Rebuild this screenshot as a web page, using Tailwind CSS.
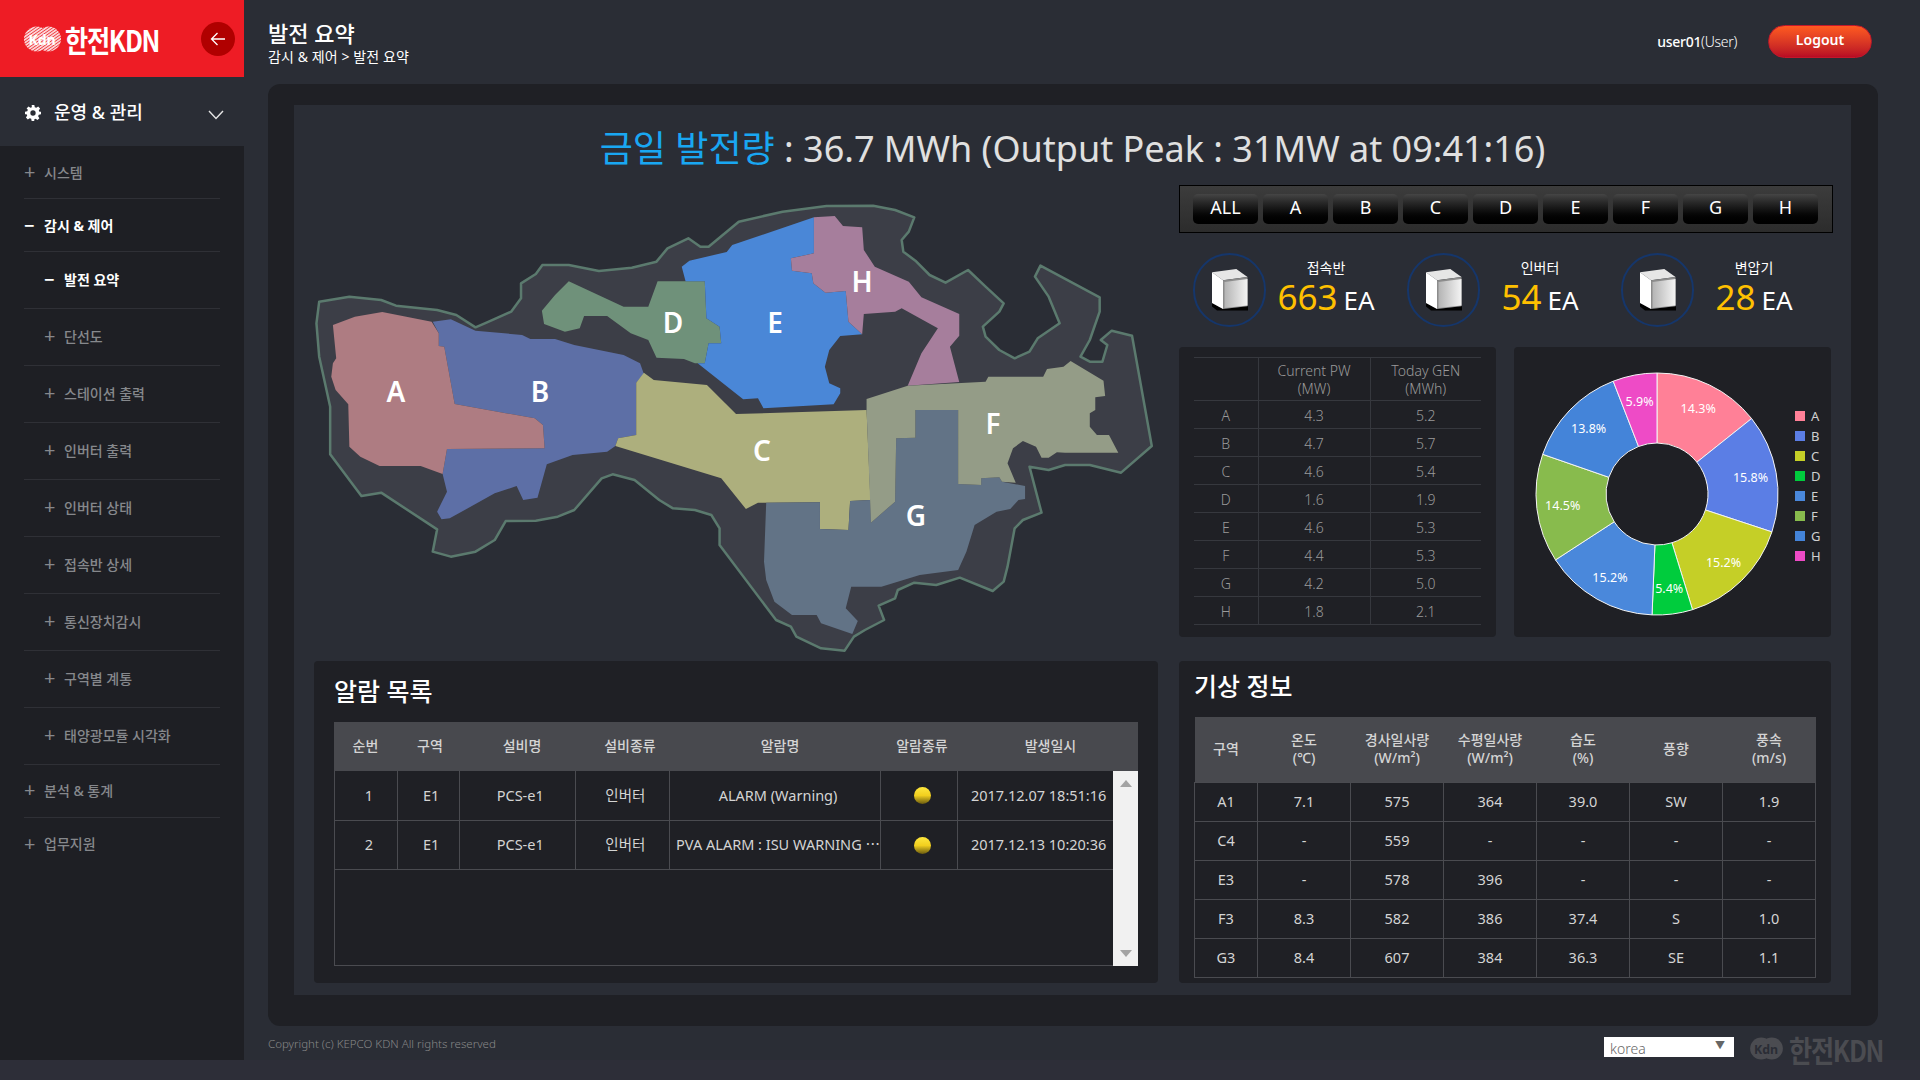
<!DOCTYPE html>
<html lang="ko">
<head>
<meta charset="UTF-8">
<title>발전 요약</title>
<script src="https://cdn.jsdelivr.net/npm/@tailwindcss/browser@4"></script>
</head>
<body class="w-[1920px] h-[1080px] overflow-hidden bg-[#2d2e38] font-['Noto_Sans','Noto_Sans_CJK_KR',sans-serif] text-white">
<div class="flex h-[1060px]">

  <!-- sidebar -->
  <aside class="w-[244px] shrink-0 bg-[#1e1f24] flex flex-col">
    <div class="h-[77px] bg-[#ee1c25] flex items-center justify-between pl-[24px] pr-[9px]">
      <div class="flex items-center gap-[4px]">
        <svg width="37" height="26" viewBox="0 0 37 26">
          <defs><pattern id="hatch" width="2.500" height="2.500" patternUnits="userSpaceOnUse" patternTransform="rotate(-35)"><rect width="2.500" height="2.500" fill="#fbd6d6"/><rect width="2.500" height="0.700" fill="#ee1c25"/></pattern></defs>
          <circle cx="12.500" cy="13" r="12.500" fill="url(#hatch)"/>
          <circle cx="24.500" cy="13" r="12.500" fill="url(#hatch)"/>
          <text x="18" y="19" text-anchor="middle" font-size="14" font-weight="700" fill="#fff">Kdn</text>
        </svg>
        <span class="w-[93px] block origin-left scale-x-[0.84] whitespace-nowrap text-[30px] leading-none font-bold tracking-[-1.5px] font-['Noto_Sans_CJK_KR',sans-serif]">한전KDN</span>
      </div>
      <button class="w-[34px] h-[34px] rounded-full bg-[#b00000] flex items-center justify-center">
        <svg width="16" height="14" viewBox="0 0 16 14" fill="none" stroke="#fff" stroke-width="1.3"><path d="M15 7H1.5M7.5 1 1.5 7l6 6"/></svg>
      </button>
    </div>
    <div class="h-[69px] bg-[#2a2d35] flex items-center pl-[25px] pr-[20px]">
      <svg class="mt-[2px]" width="16" height="16" viewBox="0 0 24 24" fill="#fff"><path fill-rule="evenodd" d="M10 0h4l.7 3.4 2.2.9L19.800 2.400 22.600 5.200 20.700 8.100l.9 2.200L24 10v4l-3.400.7-.9 2.200 1.900 2.900-2.800 2.800-2.900-1.900-2.200.9L14 24h-4l-.7-3.400-2.200-.9-2.900 1.900-2.800-2.800 1.900-2.900-.9-2.200L0 14v-4l3.400-.7.900-2.200L2.400 5.200 5.200 2.400l2.900 1.900 2.200-.9zM12 8a4 4 0 1 0 0 8 4 4 0 0 0 0-8z"/></svg>
      <span class="ml-[13px] text-[18px] font-medium leading-none">운영 &amp; 관리</span>
      <svg class="ml-auto mt-[7px]" width="16" height="10" viewBox="0 0 16 10" fill="none" stroke="#e5e5e5" stroke-width="1.4"><path d="m1 1 7 7.500L15 1"/></svg>
    </div>
    <nav class="px-[24px] text-[14px] font-medium text-[#86888c]">
      <div class="h-[53px] flex items-center border-b border-[#2f3036]"><span class="w-[20px] text-[20px] font-normal leading-none">+</span>시스템</div>
      <div class="h-[53px] flex items-center border-b border-[#2f3036] text-white font-bold"><span class="w-[20px] text-[18px] leading-none">−</span>감시 &amp; 제어</div>
      <div class="h-[57px] pb-[2px] flex items-center border-b border-[#2f3036] pl-[20px] text-white font-bold"><span class="w-[20px] text-[18px] leading-none">−</span>발전 요약</div>
      <div class="h-[57px] pb-[2px] flex items-center border-b border-[#2f3036] pl-[20px]"><span class="w-[20px] text-[20px] font-normal leading-none">+</span>단선도</div>
      <div class="h-[57px] pb-[2px] flex items-center border-b border-[#2f3036] pl-[20px]"><span class="w-[20px] text-[20px] font-normal leading-none">+</span>스테이션 출력</div>
      <div class="h-[57px] pb-[2px] flex items-center border-b border-[#2f3036] pl-[20px]"><span class="w-[20px] text-[20px] font-normal leading-none">+</span>인버터 출력</div>
      <div class="h-[57px] pb-[2px] flex items-center border-b border-[#2f3036] pl-[20px]"><span class="w-[20px] text-[20px] font-normal leading-none">+</span>인버터 상태</div>
      <div class="h-[57px] pb-[2px] flex items-center border-b border-[#2f3036] pl-[20px]"><span class="w-[20px] text-[20px] font-normal leading-none">+</span>접속반 상세</div>
      <div class="h-[57px] pb-[2px] flex items-center border-b border-[#2f3036] pl-[20px]"><span class="w-[20px] text-[20px] font-normal leading-none">+</span>통신장치감시</div>
      <div class="h-[57px] pb-[2px] flex items-center border-b border-[#2f3036] pl-[20px]"><span class="w-[20px] text-[20px] font-normal leading-none">+</span>구역별 계통</div>
      <div class="h-[57px] pb-[2px] flex items-center border-b border-[#2f3036] pl-[20px]"><span class="w-[20px] text-[20px] font-normal leading-none">+</span>태양광모듈 시각화</div>
      <div class="h-[53px] pb-[2px] flex items-center border-b border-[#2f3036]"><span class="w-[20px] text-[20px] font-normal leading-none">+</span>분석 &amp; 통계</div>
      <div class="h-[53px] pb-[2px] flex items-center"><span class="w-[20px] text-[20px] font-normal leading-none">+</span>업무지원</div>
    </nav>
  </aside>

  <!-- main -->
  <main class="flex-1 bg-[#2a2d35] pl-[24px] flex flex-col">
    <header class="h-[84px] flex items-start justify-between pr-[48px]">
      <div class="pt-[19px]">
        <h1 class="text-[22px] leading-[28px] font-medium">발전 요약</h1>
        <p class="text-[14px] leading-[20px] tracking-[0.1px]">감시 &amp; 제어 &gt; 발전 요약</p>
      </div>
      <div class="flex items-center gap-[31px] pt-[25px]">
        <span class="text-[14px] tracking-[-0.3px]"><span class="font-medium">user01</span><span class="font-light">(User)</span></span>
        <button class="w-[104px] h-[33px] rounded-full border border-[#c2182b] bg-gradient-to-b from-[#ff5a20] to-[#b80a24] text-[14px] font-semibold pb-[4px]">Logout</button>
      </div>
    </header>

    <div class="w-[1610px] h-[942px] rounded-[12px] bg-[#1f2025] pl-[26px] pt-[21px]">
      <div class="w-[1557px] h-[890px] bg-[#2a2d35]">
        <div class="h-[80px] flex items-center justify-center pt-[8px] text-[36px] leading-none text-[#e0e0e0]">
          <p><span class="text-[#19a7f2]">금일 발전량</span> : 36.7 MWh (Output Peak : 31MW at 09:41:16)</p>
        </div>

        <div class="h-[476px] flex">
          <!-- map -->
          <div class="relative ml-[6px] mt-[5px] w-[860px] h-[470px] shrink-0 text-[28px] font-semibold leading-none">
            <svg class="w-[860px] h-[470px]" viewBox="0 0 1568 1410" preserveAspectRatio="none">
              <path vector-effect="non-scaling-stroke" fill="#3c3e47" stroke="#5b7a6e" stroke-width="2.500" stroke-linejoin="round" d="M35 335 L90 320 L148 330 L175 347 L250 360 L285 375 L320 412 L340 398 L385 365 L403 325 L403 280 L430 252 L442 225 L490 225 L545 243 L605 233 L650 215 L670 175 L708 145 L730 170 L745 170 L800 95 L880 65 L960 48 L1045 47 L1085 60 L1120 82 L1110 125 L1097 150 L1100 185 L1122 212 L1148 255 L1177 278 L1218 240 L1250 290 L1283 340 L1275 365 L1245 410 L1250 440 L1275 480 L1303 505 L1330 485 L1345 445 L1385 400 L1365 320 L1340 260 L1350 227 L1458 322 L1458 365 L1440 450 L1423 500 L1440 515 L1463 515 L1472 465 L1460 450 L1480 422 L1517 437 L1553 768 L1497 848 L1440 825 L1395 825 L1365 840 L1330 830 L1352 968 L1318 990 L1303 1015 L1290 1130 L1283 1175 L1263 1203 L1203 1163 L1160 1185 L1120 1178 L1090 1200 L1085 1225 L1055 1247 L1065 1290 L1030 1320 L1010 1340 L993 1382 L950 1375 L905 1340 L895 1310 L868 1290 L765 1065 L765 1015 L750 975 L720 960 L680 955 L655 930 L610 870 L570 853 L550 865 L500 960 L470 980 L430 992 L375 993 L355 1050 L320 1085 L275 1100 L242 1085 L250 1018 L148 908 L112 918 L55 793 L55 650 L35 500 L30 400 Z"/>
              <path fill="#5d6fa6" d="M242 395 L275 388 L320 422 L405 435 L420 447 L465 447 L500 465 L590 495 L620 520 L627 552 L613 578 L613 735 L580 745 L575 768 L560 785 L497 795 L450 823 L433 923 L407 930 L395 888 L355 910 L273 985 L258 988 L250 965 L268 905 L260 852 L268 777 L446 775 L443 705 L428 685 L282 642 L263 470 L253 468 L253 430 Z"/>
              <path fill="#ae7c82" d="M60 405 L100 380 L150 366 L240 395 L253 430 L253 468 L263 470 L282 642 L428 685 L443 705 L446 775 L268 777 L260 852 L220 828 L145 828 L110 800 L90 770 L88 643 L65 600 L57 560 L60 520 L66 505 Z"/>
              <path fill="#adaf7d" d="M627 548 L645 570 L742 585 L795 672 L1033 660 L1040 930 L1003 933 L1000 1020 L948 1017 L948 937 L835 938 L813 957 L768 865 L575 768 L580 745 L613 735 L613 578 Z"/>
              <path fill="#6f917a" d="M490 274 L590 350 L635 350 L652 274 L738 274 L741 385 L765 410 L768 460 L745 460 L738 520 L720 520 L700 507 L650 503 L635 450 L603 430 L560 378 L518 378 L510 415 L483 425 L445 402 L441 362 L465 315 Z"/>
              <path fill="#4a87d7" d="M937 82 L937 190 L895 205 L897 242 L933 250 L936 280 L958 308 L995 303 L1000 395 L1025 433 L985 438 L965 480 L957 530 L965 580 L985 595 L985 610 L973 643 L845 655 L835 625 L808 628 L725 520 L738 520 L745 460 L768 460 L765 410 L741 385 L738 274 L703 274 L696 230 L710 212 L778 186 L788 165 Z"/>
              <path fill="#a67e9c" d="M937 82 L975 78 L990 108 L1025 112 L1028 180 L1048 230 L1110 275 L1133 322 L1202 372 L1202 437 L1185 470 L1202 576 L1108 587 L1133 490 L1163 415 L1097 355 L1085 365 L1028 372 L1025 433 L1000 395 L995 303 L958 308 L936 280 L933 250 L897 242 L895 205 L937 190 Z"/>
              <path fill="#627386" d="M1122 660 L1200 660 L1200 882 L1242 885 L1242 865 L1275 862 L1280 875 L1322 888 L1322 927 L1310 930 L1295 957 L1270 965 L1230 1005 L1215 1085 L1200 1140 L1130 1155 L1060 1190 L1005 1190 L995 1255 L1017 1293 L1007 1332 L950 1300 L942 1275 L897 1275 L865 1235 L850 1170 L846 1115 L850 938 L948 937 L948 1017 L1000 1020 L1003 933 L1040 930 L1041 998 L1085 935 L1087 745 L1122 743 Z"/>
              <path fill="#949c87" d="M1033 627 L1108 587 L1250 575 L1255 560 L1355 560 L1362 537 L1392 530 L1405 513 L1465 572 L1468 618 L1450 622 L1450 660 L1440 670 L1440 710 L1453 735 L1475 735 L1492 788 L1395 788 L1380 787 L1365 803 L1352 803 L1342 770 L1318 753 L1300 775 L1290 820 L1305 878 L1280 875 L1275 862 L1242 865 L1242 885 L1200 882 L1200 660 L1122 660 L1122 743 L1087 745 L1085 935 L1041 998 L1033 660 Z"/>
            </svg>
            <span class="absolute left-[96px] top-[201px] -translate-x-1/2 -translate-y-1/2">A</span>
            <span class="absolute left-[240px] top-[201px] -translate-x-1/2 -translate-y-1/2">B</span>
            <span class="absolute left-[462px] top-[260px] -translate-x-1/2 -translate-y-1/2">C</span>
            <span class="absolute left-[373px] top-[132px] -translate-x-1/2 -translate-y-1/2">D</span>
            <span class="absolute left-[475px] top-[132px] -translate-x-1/2 -translate-y-1/2">E</span>
            <span class="absolute left-[693px] top-[233px] -translate-x-1/2 -translate-y-1/2">F</span>
            <span class="absolute left-[616px] top-[325px] -translate-x-1/2 -translate-y-1/2">G</span>
            <span class="absolute left-[562px] top-[91px] -translate-x-1/2 -translate-y-1/2">H</span>
          </div>

          <div class="ml-[19px] w-[654px]">
            <!-- zone filter -->
            <div class="h-[48px] border border-black bg-gradient-to-b from-[#3c3c3c] to-[#2c2c2c] flex items-center gap-[5px] pl-[13px] text-[18px]">
              <button class="w-[65px] h-[30px] rounded-[5px] bg-gradient-to-b from-[#454545] to-black leading-none pb-[4px]">ALL</button>
              <button class="w-[65px] h-[30px] rounded-[5px] bg-gradient-to-b from-[#454545] to-black leading-none pb-[4px]">A</button>
              <button class="w-[65px] h-[30px] rounded-[5px] bg-gradient-to-b from-[#454545] to-black leading-none pb-[4px]">B</button>
              <button class="w-[65px] h-[30px] rounded-[5px] bg-gradient-to-b from-[#454545] to-black leading-none pb-[4px]">C</button>
              <button class="w-[65px] h-[30px] rounded-[5px] bg-gradient-to-b from-[#454545] to-black leading-none pb-[4px]">D</button>
              <button class="w-[65px] h-[30px] rounded-[5px] bg-gradient-to-b from-[#454545] to-black leading-none pb-[4px]">E</button>
              <button class="w-[65px] h-[30px] rounded-[5px] bg-gradient-to-b from-[#454545] to-black leading-none pb-[4px]">F</button>
              <button class="w-[65px] h-[30px] rounded-[5px] bg-gradient-to-b from-[#454545] to-black leading-none pb-[4px]">G</button>
              <button class="w-[65px] h-[30px] rounded-[5px] bg-gradient-to-b from-[#454545] to-black leading-none pb-[4px]">H</button>
            </div>

            <!-- equipment counts -->
            <div class="mt-[20px] h-[74px] flex gap-[21px] pl-[14px]">
              <div class="w-[193px] flex">
                <div class="w-[73px] h-[74px] shrink-0 rounded-full border-2 border-[#15366b] flex items-center justify-center">
                  <svg width="36" height="42" viewBox="0 0 36 42"><defs><linearGradient id="cubeFace"><stop offset="0" stop-color="#b4b4b4"/><stop offset="1" stop-color="#f4f4f4"/></linearGradient></defs><path fill="#000" d="M0 34 11 40 36 37 36 41.500 5 41.500 0 37.500Z"/><path fill="#e6e6e6" d="M0 3.300 24.300 0 35.500 8 11 11.300Z"/><path fill="#fff" d="M0 3.300 11 11.300 11 40 0 34Z"/><path fill="#8c8c8c" d="M11 11.300 35.500 8 35.500 37.300 11 40Z"/><path fill="url(#cubeFace)" d="M12.500 13 35.500 10 35.500 36.500 12.500 39Z"/></svg>
                </div>
                <div class="w-[120px] text-center">
                  <p class="text-[14px] leading-[20px] pt-[5px]">접속반</p>
                  <p class="h-[36px] mt-[1px] flex items-baseline justify-center gap-[6px] whitespace-nowrap"><span class="block text-[35px] leading-[36px] text-[#ffc000]">663</span><span class="block text-[26px] leading-[36px]">EA</span></p>
                </div>
              </div>
              <div class="w-[193px] flex">
                <div class="w-[73px] h-[74px] shrink-0 rounded-full border-2 border-[#15366b] flex items-center justify-center">
                  <svg width="36" height="42" viewBox="0 0 36 42"><path fill="#000" d="M0 34 11 40 36 37 36 41.500 5 41.500 0 37.500Z"/><path fill="#e6e6e6" d="M0 3.300 24.300 0 35.500 8 11 11.300Z"/><path fill="#fff" d="M0 3.300 11 11.300 11 40 0 34Z"/><path fill="#8c8c8c" d="M11 11.300 35.500 8 35.500 37.300 11 40Z"/><path fill="url(#cubeFace)" d="M12.500 13 35.500 10 35.500 36.500 12.500 39Z"/></svg>
                </div>
                <div class="w-[120px] text-center">
                  <p class="text-[14px] leading-[20px] pt-[5px]">인버터</p>
                  <p class="h-[36px] mt-[1px] flex items-baseline justify-center gap-[6px] whitespace-nowrap"><span class="block text-[35px] leading-[36px] text-[#ffc000]">54</span><span class="block text-[26px] leading-[36px]">EA</span></p>
                </div>
              </div>
              <div class="w-[193px] flex">
                <div class="w-[73px] h-[74px] shrink-0 rounded-full border-2 border-[#15366b] flex items-center justify-center">
                  <svg width="36" height="42" viewBox="0 0 36 42"><path fill="#000" d="M0 34 11 40 36 37 36 41.500 5 41.500 0 37.500Z"/><path fill="#e6e6e6" d="M0 3.300 24.300 0 35.500 8 11 11.300Z"/><path fill="#fff" d="M0 3.300 11 11.300 11 40 0 34Z"/><path fill="#8c8c8c" d="M11 11.300 35.500 8 35.500 37.300 11 40Z"/><path fill="url(#cubeFace)" d="M12.500 13 35.500 10 35.500 36.500 12.500 39Z"/></svg>
                </div>
                <div class="w-[120px] text-center">
                  <p class="text-[14px] leading-[20px] pt-[5px]">변압기</p>
                  <p class="h-[36px] mt-[1px] flex items-baseline justify-center gap-[6px] whitespace-nowrap"><span class="block text-[35px] leading-[36px] text-[#ffc000]">28</span><span class="block text-[26px] leading-[36px]">EA</span></p>
                </div>
              </div>
            </div>

            <div class="mt-[20px] flex gap-[18px]">
              <!-- zone output -->
              <div class="w-[317px] h-[290px] rounded-[4px] bg-[#1f2025] px-[15px] pt-[10px]">
                <table class="w-[287px] table-fixed border-collapse text-[14px] font-light text-[#9a9a9a] text-center [&_td]:pt-[2px] [&_th]:pt-[2px]">
                  <colgroup><col class="w-[64px]"><col class="w-[112px]"><col class="w-[111px]"></colgroup>
                  <thead>
                    <tr class="h-[43px] border-y border-[#36383e] leading-[18px]"><th class="font-light"></th><th class="font-light border-l border-[#36383e]">Current PW<br>(MW)</th><th class="font-light border-l border-[#36383e]">Today GEN<br>(MWh)</th></tr>
                  </thead>
                  <tbody>
                    <tr class="h-[28px] border-b border-[#36383e]"><td>A</td><td class="border-l border-[#36383e]">4.3</td><td class="border-l border-[#36383e]">5.2</td></tr>
                    <tr class="h-[28px] border-b border-[#36383e]"><td>B</td><td class="border-l border-[#36383e]">4.7</td><td class="border-l border-[#36383e]">5.7</td></tr>
                    <tr class="h-[28px] border-b border-[#36383e]"><td>C</td><td class="border-l border-[#36383e]">4.6</td><td class="border-l border-[#36383e]">5.4</td></tr>
                    <tr class="h-[28px] border-b border-[#36383e]"><td>D</td><td class="border-l border-[#36383e]">1.6</td><td class="border-l border-[#36383e]">1.9</td></tr>
                    <tr class="h-[28px] border-b border-[#36383e]"><td>E</td><td class="border-l border-[#36383e]">4.6</td><td class="border-l border-[#36383e]">5.3</td></tr>
                    <tr class="h-[28px] border-b border-[#36383e]"><td>F</td><td class="border-l border-[#36383e]">4.4</td><td class="border-l border-[#36383e]">5.3</td></tr>
                    <tr class="h-[28px] border-b border-[#36383e]"><td>G</td><td class="border-l border-[#36383e]">4.2</td><td class="border-l border-[#36383e]">5.0</td></tr>
                    <tr class="h-[28px] border-b border-[#36383e]"><td>H</td><td class="border-l border-[#36383e]">1.8</td><td class="border-l border-[#36383e]">2.1</td></tr>
                  </tbody>
                </table>
              </div>
              <!-- share chart -->
              <div class="w-[317px] h-[290px] rounded-[4px] bg-[#1f2025]">
                <svg id="pie" width="317" height="290" viewBox="0 0 317 290"></svg>
              </div>
            </div>
          </div>
        </div>

        <div class="flex gap-[21px] pl-[20px]">
          <!-- alarms -->
          <section class="w-[844px] h-[322px] rounded-[4px] bg-[#1f2025] px-[20px]">
            <h2 class="h-[61px] flex items-center text-[25px] font-medium">알람 목록</h2>
            <table class="w-[804px] table-fixed text-[14px] font-medium text-[#d4d4d4] text-center bg-[#48494e]">
              <colgroup><col class="w-[63px]"><col class="w-[66px]"><col class="w-[118px]"><col class="w-[98px]"><col class="w-[202px]"><col class="w-[82px]"><col class="w-[175px]"></colgroup>
              <thead><tr class="h-[49px] [&_th]:pb-[2px]"><th class="font-medium">순번</th><th class="font-medium">구역</th><th class="font-medium">설비명</th><th class="font-medium">설비종류</th><th class="font-medium">알람명</th><th class="font-medium">알람종류</th><th class="font-medium">발생일시</th></tr></thead>
            </table>
            <div class="flex h-[195px] border-l border-b border-[#4a4b50]">
              <table class="w-[778px] h-[98px] table-fixed border-collapse text-[14.500px] text-[#d4d4d4] text-center [&_td]:pl-[6px] [&_td]:pt-[1px]">
                <colgroup><col class="w-[62px]"><col class="w-[62px]"><col class="w-[116px]"><col class="w-[94px]"><col class="w-[211px]"><col class="w-[77px]"><col class="w-[155px]"></colgroup>
                <tbody>
                  <tr class="h-[49px] border-b border-[#4a4b50]"><td>1</td><td class="border-l border-[#4a4b50]">E1</td><td class="border-l border-[#4a4b50]">PCS-e1</td><td class="border-l border-[#4a4b50]">인버터</td><td class="border-l border-[#4a4b50]">ALARM (Warning)</td><td class="border-l border-[#4a4b50]"><span class="block mx-auto w-[17px] h-[17px] rounded-full bg-gradient-to-b from-[#ffe83c] via-[#f2cf1e] to-[#6b5c10]"></span></td><td class="border-l border-[#4a4b50] whitespace-nowrap">2017.12.07 18:51:16</td></tr>
                  <tr class="h-[49px] border-b border-[#4a4b50]"><td>2</td><td class="border-l border-[#4a4b50]">E1</td><td class="border-l border-[#4a4b50]">PCS-e1</td><td class="border-l border-[#4a4b50]">인버터</td><td class="border-l border-[#4a4b50] whitespace-nowrap overflow-hidden">PVA ALARM : ISU WARNING ⋯</td><td class="border-l border-[#4a4b50]"><span class="block mx-auto w-[17px] h-[17px] rounded-full bg-gradient-to-b from-[#ffe83c] via-[#f2cf1e] to-[#6b5c10]"></span></td><td class="border-l border-[#4a4b50] whitespace-nowrap">2017.12.13 10:20:36</td></tr>
                </tbody>
              </table>
              <div class="w-[25px] h-[195px] shrink-0 bg-[#f1f1f1] flex flex-col items-center justify-between py-[9px]">
                <svg width="12" height="7" viewBox="0 0 12 7"><path fill="#a3a3a3" d="M6 0l6 7H0z"/></svg>
                <svg width="12" height="7" viewBox="0 0 12 7"><path fill="#a3a3a3" d="M6 7 0 0h12z"/></svg>
              </div>
            </div>
          </section>

          <!-- weather -->
          <section class="w-[652px] h-[322px] rounded-[4px] bg-[#1f2025] pl-[15px]">
            <h2 class="h-[56px] pb-[4px] flex items-center text-[25px] font-medium">기상 정보</h2>
            <table class="w-[621px] table-fixed border-collapse text-[14.500px] text-[#d4d4d4] text-center">
              <colgroup><col class="w-[63px]"><col class="w-[93px]"><col class="w-[93px]"><col class="w-[93px]"><col class="w-[93px]"><col class="w-[93px]"><col class="w-[93px]"></colgroup>
              <thead>
                <tr class="h-[65px] bg-[#48494e] leading-[18px] text-[14px]"><th class="font-medium">구역</th><th class="font-medium">온도<br>(℃)</th><th class="font-medium">경사일사량<br>(W/m²)</th><th class="font-medium">수평일사량<br>(W/m²)</th><th class="font-medium">습도<br>(%)</th><th class="font-medium">풍향</th><th class="font-medium">풍속<br>(m/s)</th></tr>
              </thead>
              <tbody>
                <tr class="h-[39px]"><td class="border border-[#4a4b50]">A1</td><td class="border border-[#4a4b50]">7.1</td><td class="border border-[#4a4b50]">575</td><td class="border border-[#4a4b50]">364</td><td class="border border-[#4a4b50]">39.0</td><td class="border border-[#4a4b50]">SW</td><td class="border border-[#4a4b50]">1.9</td></tr>
                <tr class="h-[39px]"><td class="border border-[#4a4b50]">C4</td><td class="border border-[#4a4b50]">-</td><td class="border border-[#4a4b50]">559</td><td class="border border-[#4a4b50]">-</td><td class="border border-[#4a4b50]">-</td><td class="border border-[#4a4b50]">-</td><td class="border border-[#4a4b50]">-</td></tr>
                <tr class="h-[39px]"><td class="border border-[#4a4b50]">E3</td><td class="border border-[#4a4b50]">-</td><td class="border border-[#4a4b50]">578</td><td class="border border-[#4a4b50]">396</td><td class="border border-[#4a4b50]">-</td><td class="border border-[#4a4b50]">-</td><td class="border border-[#4a4b50]">-</td></tr>
                <tr class="h-[39px]"><td class="border border-[#4a4b50]">F3</td><td class="border border-[#4a4b50]">8.3</td><td class="border border-[#4a4b50]">582</td><td class="border border-[#4a4b50]">386</td><td class="border border-[#4a4b50]">37.4</td><td class="border border-[#4a4b50]">S</td><td class="border border-[#4a4b50]">1.0</td></tr>
                <tr class="h-[39px]"><td class="border border-[#4a4b50]">G3</td><td class="border border-[#4a4b50]">8.4</td><td class="border border-[#4a4b50]">607</td><td class="border border-[#4a4b50]">384</td><td class="border border-[#4a4b50]">36.3</td><td class="border border-[#4a4b50]">SE</td><td class="border border-[#4a4b50]">1.1</td></tr>
              </tbody>
            </table>
          </section>
        </div>
      </div>
    </div>

    <footer class="h-[34px] flex items-start justify-between pr-[37px]">
      <p class="pt-[9px] text-[11.500px] font-light text-[#888]">Copyright (c) KEPCO KDN All rights reserved</p>
      <div class="flex pt-[11px] gap-[14px]">
        <div class="w-[130px] h-[20px] bg-white text-[#666] text-[14px] font-light leading-[24px] pl-[6px] pr-[9px] flex justify-between overflow-hidden"><span>korea</span><span class="text-[10px] leading-[16px]">▼</span></div>
        <div class="w-[135px] h-[23px] flex items-center gap-[4px] text-[#4b4c51]">
          <svg width="37" height="23" viewBox="0 0 37 26"><circle cx="12.500" cy="13" r="12.500" fill="#4b4c51"/><circle cx="24.500" cy="13" r="12.500" fill="#4b4c51"/><text x="18" y="19" text-anchor="middle" font-size="14" font-weight="700" fill="#2a2d35">Kdn</text></svg>
          <span class="w-[93px] block origin-left scale-x-[0.84] whitespace-nowrap text-[30px] leading-none font-bold tracking-[-1.5px] font-['Noto_Sans_CJK_KR',sans-serif]">한전KDN</span>
        </div>
      </div>
    </footer>
  </main>
</div>

<script>
  // 구역별 발전 비율
  const zones = [
    ['A', 14.3, '#ff8097'], ['B', 15.8, '#5b7ee5'], ['C', 15.2, '#c5cf27'], ['D', 5.4, '#00cc3d'],
    ['E', 15.2, '#4a88db'], ['F', 14.5, '#88bb4d'], ['G', 13.8, '#4484d9'], ['H', 5.9, '#ee4bc6']
  ];
  const cx = 143, cy = 147, R = 121, r = 51;
  const total = zones.reduce((sum, z) => sum + z[1], 0);
  const point = (rad, deg) => {
    const a = (deg - 90) * Math.PI / 180;
    return (cx + rad * Math.cos(a)).toFixed(2) + ' ' + (cy + rad * Math.sin(a)).toFixed(2);
  };
  let angle = 0, html = '';
  zones.forEach((z, i) => {
    const sweep = z[1] / total * 360;
    const end = angle + sweep;
    html += `<path fill="${z[2]}" stroke="#f4f4f4" stroke-width="1" d="M${point(r, angle)} L${point(R, angle)} A${R} ${R} 0 0 1 ${point(R, end)} L${point(r, end)} A${r} ${r} 0 0 0 ${point(r, angle)} Z"/>`;
    const [tx, ty] = point(95, angle + sweep / 2).split(' ');
    html += `<text x="${tx}" y="${+ty + 5}" text-anchor="middle" font-size="12.500" fill="#fff">${z[1]}%</text>`;
    html += `<rect x="281" y="${64 + i * 20}" width="10" height="10" fill="${z[2]}"/>`;
    html += `<text x="297" y="${74 + i * 20}" font-size="13" fill="#d0d0d0">${z[0]}</text>`;
    angle = end;
  });
  document.getElementById('pie').innerHTML = html;
</script>
</body>
</html>
